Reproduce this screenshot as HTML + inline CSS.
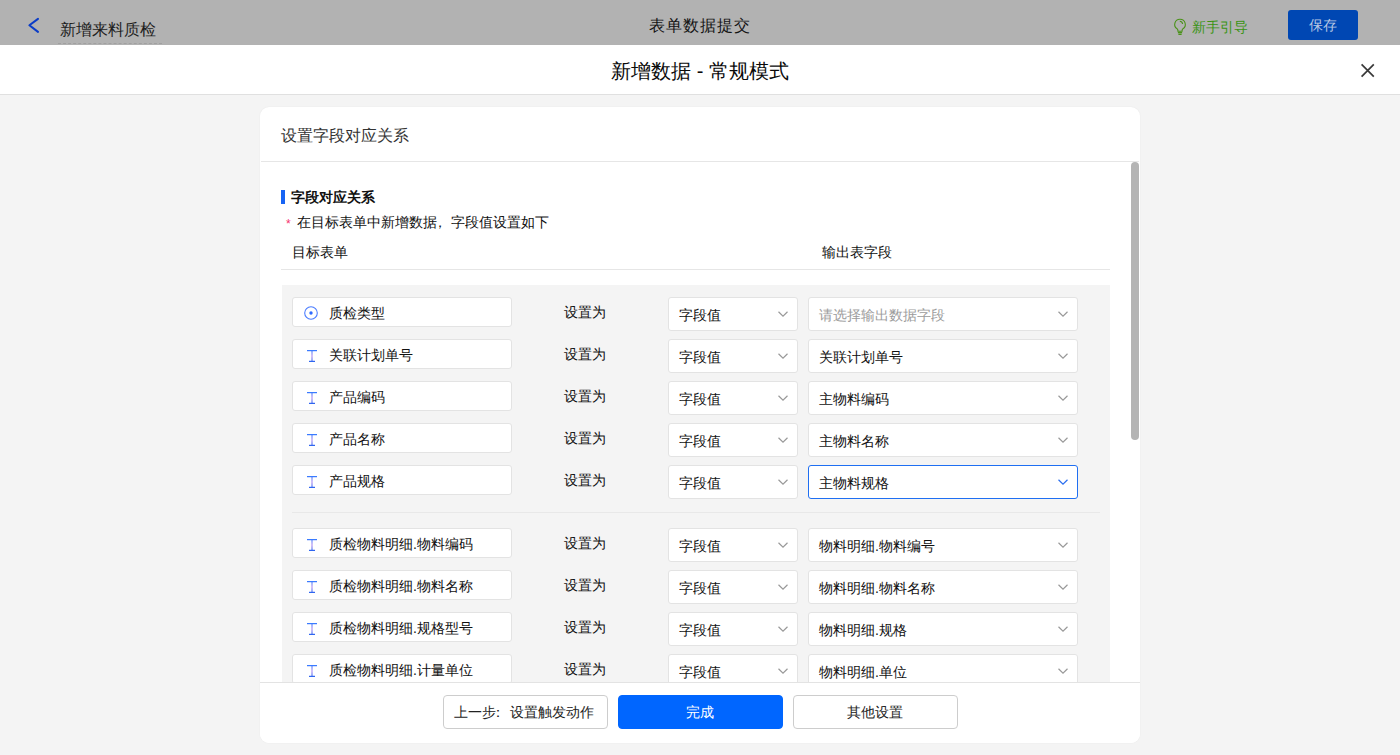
<!DOCTYPE html>
<html><head><meta charset="utf-8">
<style>
*{box-sizing:border-box;margin:0;padding:0}
html,body{width:1400px;height:755px;overflow:hidden;background:#f4f4f4;font-family:"Liberation Sans",sans-serif;color:#333}
.topbar{position:absolute;left:0;top:0;width:1400px;height:45px;background:#b2b2b2}
.back{position:absolute;left:28px;top:17px}
.tb-title{position:absolute;left:60px;top:20px;font-size:16px;color:#1e1e1e;line-height:20px}
.tb-title:after{content:"";position:absolute;left:-2px;right:-6px;top:23px;border-top:1px dashed #a0a0a0}
.tb-center{position:absolute;left:649px;top:16px;font-size:16px;letter-spacing:1px;color:#141414;line-height:20px}
.guide{position:absolute;left:1173px;top:17px;font-size:14px;color:#3a9412;line-height:18px}
.guide svg{position:absolute;left:0;top:1px}
.guide span{position:absolute;left:19px;top:1px;white-space:nowrap}
.save{position:absolute;left:1288px;top:10px;width:70px;height:30px;background:#0047b3;border-radius:3px;color:#b9c8e3;font-size:14px;line-height:30px;text-align:center}
.mhead{position:absolute;left:0;top:45px;width:1400px;height:50px;background:#fff;border-bottom:1px solid #e0e0e0}
.mtitle{position:absolute;left:0;width:1400px;top:14px;text-align:center;font-size:20px;color:#0a0a0a;line-height:24px}
.close{position:absolute;left:1360px;top:18px}
.card{position:absolute;left:260px;top:107px;width:880px;height:636px;background:#fff;border-radius:9px;overflow:hidden;box-shadow:0 0 1.5px rgba(0,0,0,.07)}
.chead{position:absolute;left:1px;top:0;width:878px;height:55px;border-bottom:1px solid #e6e6e6}
.chead span{position:absolute;left:20px;top:19px;font-size:16px;color:#333;line-height:20px}
.scroll{position:absolute;left:871px;top:55px;width:8px;height:278px;background:#b4b4b4;border-radius:4px}
.sec{position:absolute;left:21px;top:82px;height:16px}
.sec i{position:absolute;left:0;top:1px;width:4px;height:14px;background:#1764f4}
.sec span{position:absolute;left:10px;top:-1px;font-size:14px;font-weight:bold;color:#111;line-height:18px;white-space:nowrap}
.req{position:absolute;left:26px;top:106px;font-size:14px;color:#111;line-height:18px;white-space:nowrap}
.req b{color:#f5316f;font-weight:normal;font-size:12px;margin-right:6px;position:relative;top:1px;left:0}
.colh{position:absolute;top:136px;font-size:14px;color:#111;line-height:18px;white-space:nowrap}
.hline{position:absolute;left:21px;top:162px;width:829px;border-top:1px solid #e6e6e6}
.grey{position:absolute;left:22px;top:178px;width:828px;height:460px;background:#f4f4f4}
.row{position:absolute;left:0;width:880px;height:34px}
.fld{position:absolute;left:32px;top:0;width:220px;height:30px;background:#fff;border:1px solid #e3e3e3;border-radius:3px}
.fld span{position:absolute;left:36px;top:6px;font-size:14px;color:#111;line-height:18px;white-space:nowrap}
.fld svg{position:absolute;left:13px;top:9px}
.fi-c svg{left:9.5px;top:6.5px}
.setas{position:absolute;left:304px;top:6px;font-size:14px;color:#111;line-height:18px}
.sel{position:absolute;top:0;height:34px;background:#fff;border:1px solid #e3e3e3;border-radius:3px}
.sel span{position:absolute;left:10px;top:8px;font-size:14px;color:#111;line-height:18px;white-space:nowrap}
.sel svg{position:absolute;right:8.5px;top:12px}
.s1{left:408px;width:130px}
.s2{left:548px;width:270px}
.sel.ph span{color:#9c9c9c}
.sel.act{border-color:#1f6ff2}
.divl{position:absolute;left:32px;top:405px;width:808px;border-top:1px solid #e8e8e8}
.foot{position:absolute;left:0;top:575px;width:880px;height:61px;background:#fff;border-top:1px solid #e3e3e3}
.btn{text-indent:-2px;position:absolute;top:12px;width:165px;height:34px;border:1px solid #cdcdcd;border-radius:4px;background:#fff;font-size:14px;color:#222;text-align:center;line-height:32px}
.btn.pri{background:#0066ff;border-color:#0066ff;color:#fff}
</style></head><body>
<div class="topbar">
  <svg class="back" width="14" height="18" viewBox="0 0 14 18"><path d="M10 1.9 L1.4 8.3 L10 14.9" fill="none" stroke="#0a3cc7" stroke-width="2" stroke-linecap="round" stroke-linejoin="round"/></svg>
  <div class="tb-title">新增来料质检</div>
  <div class="tb-center">表单数据提交</div>
  <div class="guide"><svg width="14" height="18" viewBox="0 0 14 18"><path d="M7 1.2a5.2 5.2 0 0 0-3 9.5c.6.5.9 1.1.9 1.8v.7h4.2v-.7c0-.7.3-1.3.9-1.8A5.2 5.2 0 0 0 7 1.2z" fill="none" stroke="#4a9218" stroke-width="1.1"/><path d="M4.9 14.6h4.2M5.4 16.4h3.2" stroke="#4a9218" stroke-width="1.1"/><path d="M6.8 3.2a3 3 0 0 1 2.8 2.8" fill="none" stroke="#4a9218" stroke-width="1.1"/></svg><span>新手引导</span></div>
  <div class="save">保存</div>
</div>
<div class="mhead">
  <div class="mtitle">新增数据 - 常规模式</div>
  <svg class="close" width="16" height="16" viewBox="0 0 16 16"><path d="M1.6 1.4L13.8 13.6M13.8 1.4L1.6 13.6" stroke="#3a3a3a" stroke-width="1.7"/></svg>
</div>
<div class="card">
  <div class="chead"><span>设置字段对应关系</span></div>
  <div class="sec"><i></i><span>字段对应关系</span></div>
  <div class="req"><b>*</b>在目标表单中新增数据<span style="position:relative;left:-4px">，</span>字段值设置如下</div>
  <div class="colh" style="left:32px">目标表单</div>
  <div class="colh" style="left:562px">输出表字段</div>
  <div class="hline"></div>
  <div class="grey"></div>
  <div id="rows"><div class="row" style="top:190px"><div class="fld fi-c"><svg width="16" height="16" viewBox="0 0 16 16"><circle cx="8" cy="8" r="6.3" fill="none" stroke="#4a7cff" stroke-width="1.1"/><circle cx="8" cy="8" r="1.7" fill="#2f6bff"/></svg><span>质检类型</span></div><div class="setas">设置为</div><div class="sel s1"><span>字段值</span><svg width="12" height="8" viewBox="0 0 12 8"><path d="M1.5 1.8L6 6.2L10.5 1.8" fill="none" stroke="#999" stroke-width="1.2"/></svg></div><div class="sel s2 ph"><span>请选择输出数据字段</span><svg width="12" height="8" viewBox="0 0 12 8"><path d="M1.5 1.8L6 6.2L10.5 1.8" fill="none" stroke="#999" stroke-width="1.2"/></svg></div></div>
<div class="row" style="top:232px"><div class="fld fi-t"><svg width="12" height="14" viewBox="0 0 12 14"><defs><linearGradient id="g1" x1="0" y1="0" x2="0" y2="1"><stop offset="0" stop-color="#3a7bff"/><stop offset="0.5" stop-color="#b58cf0"/><stop offset="1" stop-color="#2f66f0"/></linearGradient></defs><path d="M1 1.6h10M6 1.6v10.8M3 12.4h6" fill="none" stroke="url(#g1)" stroke-width="1.1"/></svg><span>关联计划单号</span></div><div class="setas">设置为</div><div class="sel s1"><span>字段值</span><svg width="12" height="8" viewBox="0 0 12 8"><path d="M1.5 1.8L6 6.2L10.5 1.8" fill="none" stroke="#999" stroke-width="1.2"/></svg></div><div class="sel s2 "><span>关联计划单号</span><svg width="12" height="8" viewBox="0 0 12 8"><path d="M1.5 1.8L6 6.2L10.5 1.8" fill="none" stroke="#999" stroke-width="1.2"/></svg></div></div>
<div class="row" style="top:274px"><div class="fld fi-t"><svg width="12" height="14" viewBox="0 0 12 14"><defs><linearGradient id="g2" x1="0" y1="0" x2="0" y2="1"><stop offset="0" stop-color="#3a7bff"/><stop offset="0.5" stop-color="#b58cf0"/><stop offset="1" stop-color="#2f66f0"/></linearGradient></defs><path d="M1 1.6h10M6 1.6v10.8M3 12.4h6" fill="none" stroke="url(#g2)" stroke-width="1.1"/></svg><span>产品编码</span></div><div class="setas">设置为</div><div class="sel s1"><span>字段值</span><svg width="12" height="8" viewBox="0 0 12 8"><path d="M1.5 1.8L6 6.2L10.5 1.8" fill="none" stroke="#999" stroke-width="1.2"/></svg></div><div class="sel s2 "><span>主物料编码</span><svg width="12" height="8" viewBox="0 0 12 8"><path d="M1.5 1.8L6 6.2L10.5 1.8" fill="none" stroke="#999" stroke-width="1.2"/></svg></div></div>
<div class="row" style="top:316px"><div class="fld fi-t"><svg width="12" height="14" viewBox="0 0 12 14"><defs><linearGradient id="g3" x1="0" y1="0" x2="0" y2="1"><stop offset="0" stop-color="#3a7bff"/><stop offset="0.5" stop-color="#b58cf0"/><stop offset="1" stop-color="#2f66f0"/></linearGradient></defs><path d="M1 1.6h10M6 1.6v10.8M3 12.4h6" fill="none" stroke="url(#g3)" stroke-width="1.1"/></svg><span>产品名称</span></div><div class="setas">设置为</div><div class="sel s1"><span>字段值</span><svg width="12" height="8" viewBox="0 0 12 8"><path d="M1.5 1.8L6 6.2L10.5 1.8" fill="none" stroke="#999" stroke-width="1.2"/></svg></div><div class="sel s2 "><span>主物料名称</span><svg width="12" height="8" viewBox="0 0 12 8"><path d="M1.5 1.8L6 6.2L10.5 1.8" fill="none" stroke="#999" stroke-width="1.2"/></svg></div></div>
<div class="row" style="top:358px"><div class="fld fi-t"><svg width="12" height="14" viewBox="0 0 12 14"><defs><linearGradient id="g4" x1="0" y1="0" x2="0" y2="1"><stop offset="0" stop-color="#3a7bff"/><stop offset="0.5" stop-color="#b58cf0"/><stop offset="1" stop-color="#2f66f0"/></linearGradient></defs><path d="M1 1.6h10M6 1.6v10.8M3 12.4h6" fill="none" stroke="url(#g4)" stroke-width="1.1"/></svg><span>产品规格</span></div><div class="setas">设置为</div><div class="sel s1"><span>字段值</span><svg width="12" height="8" viewBox="0 0 12 8"><path d="M1.5 1.8L6 6.2L10.5 1.8" fill="none" stroke="#999" stroke-width="1.2"/></svg></div><div class="sel s2 act"><span>主物料规格</span><svg width="12" height="8" viewBox="0 0 12 8"><path d="M1.5 1.8L6 6.2L10.5 1.8" fill="none" stroke="#2a6ef0" stroke-width="1.2"/></svg></div></div>
<div class="divl"></div>
<div class="row" style="top:421px"><div class="fld fi-t"><svg width="12" height="14" viewBox="0 0 12 14"><defs><linearGradient id="g5" x1="0" y1="0" x2="0" y2="1"><stop offset="0" stop-color="#3a7bff"/><stop offset="0.5" stop-color="#b58cf0"/><stop offset="1" stop-color="#2f66f0"/></linearGradient></defs><path d="M1 1.6h10M6 1.6v10.8M3 12.4h6" fill="none" stroke="url(#g5)" stroke-width="1.1"/></svg><span>质检物料明细.物料编码</span></div><div class="setas">设置为</div><div class="sel s1"><span>字段值</span><svg width="12" height="8" viewBox="0 0 12 8"><path d="M1.5 1.8L6 6.2L10.5 1.8" fill="none" stroke="#999" stroke-width="1.2"/></svg></div><div class="sel s2 "><span>物料明细.物料编号</span><svg width="12" height="8" viewBox="0 0 12 8"><path d="M1.5 1.8L6 6.2L10.5 1.8" fill="none" stroke="#999" stroke-width="1.2"/></svg></div></div>
<div class="row" style="top:463px"><div class="fld fi-t"><svg width="12" height="14" viewBox="0 0 12 14"><defs><linearGradient id="g6" x1="0" y1="0" x2="0" y2="1"><stop offset="0" stop-color="#3a7bff"/><stop offset="0.5" stop-color="#b58cf0"/><stop offset="1" stop-color="#2f66f0"/></linearGradient></defs><path d="M1 1.6h10M6 1.6v10.8M3 12.4h6" fill="none" stroke="url(#g6)" stroke-width="1.1"/></svg><span>质检物料明细.物料名称</span></div><div class="setas">设置为</div><div class="sel s1"><span>字段值</span><svg width="12" height="8" viewBox="0 0 12 8"><path d="M1.5 1.8L6 6.2L10.5 1.8" fill="none" stroke="#999" stroke-width="1.2"/></svg></div><div class="sel s2 "><span>物料明细.物料名称</span><svg width="12" height="8" viewBox="0 0 12 8"><path d="M1.5 1.8L6 6.2L10.5 1.8" fill="none" stroke="#999" stroke-width="1.2"/></svg></div></div>
<div class="row" style="top:505px"><div class="fld fi-t"><svg width="12" height="14" viewBox="0 0 12 14"><defs><linearGradient id="g7" x1="0" y1="0" x2="0" y2="1"><stop offset="0" stop-color="#3a7bff"/><stop offset="0.5" stop-color="#b58cf0"/><stop offset="1" stop-color="#2f66f0"/></linearGradient></defs><path d="M1 1.6h10M6 1.6v10.8M3 12.4h6" fill="none" stroke="url(#g7)" stroke-width="1.1"/></svg><span>质检物料明细.规格型号</span></div><div class="setas">设置为</div><div class="sel s1"><span>字段值</span><svg width="12" height="8" viewBox="0 0 12 8"><path d="M1.5 1.8L6 6.2L10.5 1.8" fill="none" stroke="#999" stroke-width="1.2"/></svg></div><div class="sel s2 "><span>物料明细.规格</span><svg width="12" height="8" viewBox="0 0 12 8"><path d="M1.5 1.8L6 6.2L10.5 1.8" fill="none" stroke="#999" stroke-width="1.2"/></svg></div></div>
<div class="row" style="top:547px"><div class="fld fi-t"><svg width="12" height="14" viewBox="0 0 12 14"><defs><linearGradient id="g8" x1="0" y1="0" x2="0" y2="1"><stop offset="0" stop-color="#3a7bff"/><stop offset="0.5" stop-color="#b58cf0"/><stop offset="1" stop-color="#2f66f0"/></linearGradient></defs><path d="M1 1.6h10M6 1.6v10.8M3 12.4h6" fill="none" stroke="url(#g8)" stroke-width="1.1"/></svg><span>质检物料明细.计量单位</span></div><div class="setas">设置为</div><div class="sel s1"><span>字段值</span><svg width="12" height="8" viewBox="0 0 12 8"><path d="M1.5 1.8L6 6.2L10.5 1.8" fill="none" stroke="#999" stroke-width="1.2"/></svg></div><div class="sel s2 "><span>物料明细.单位</span><svg width="12" height="8" viewBox="0 0 12 8"><path d="M1.5 1.8L6 6.2L10.5 1.8" fill="none" stroke="#999" stroke-width="1.2"/></svg></div></div></div><!--rows-->
  <div class="foot">
    <div class="btn" style="left:183px;text-indent:-4px">上一步<span style="position:relative;left:-5px">：</span>设置触发动作</div>
    <div class="btn pri" style="left:358px">完成</div>
    <div class="btn" style="left:533px">其他设置</div>
  </div>
  <div class="scroll"></div>
</div>
</body></html>
